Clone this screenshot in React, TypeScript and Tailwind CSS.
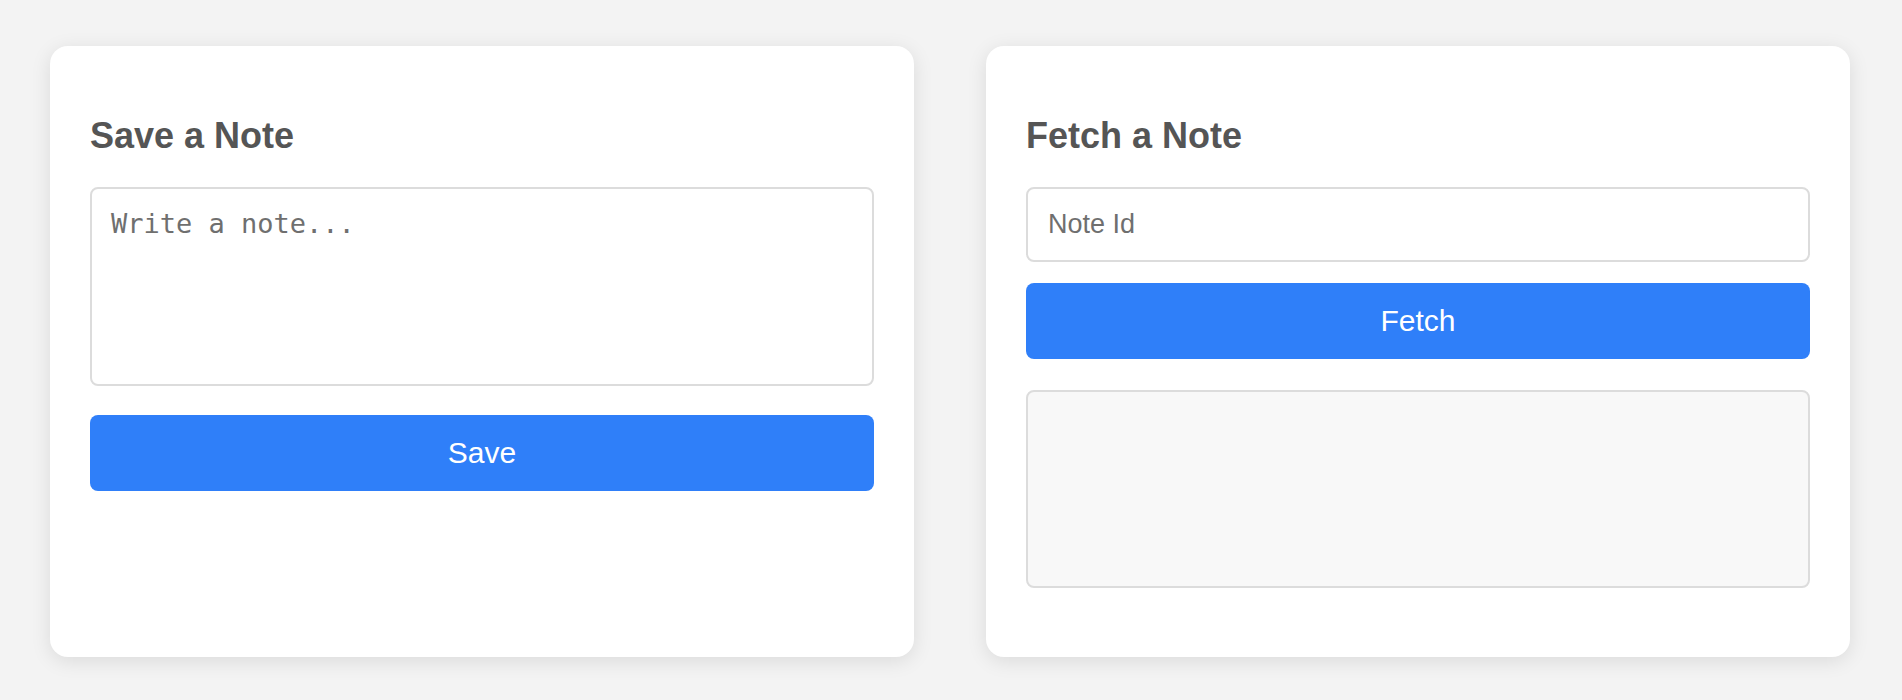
import { useState } from "react";

export default function App() {
  const [note, setNote] = useState("");
  const [noteId, setNoteId] = useState("");
  const [result, setResult] = useState("");

  const handleSave = () => {
    // nothing to save to in here, just clear the field
    setNote("");
  };

  const handleFetch = () => {
    setResult(noteId ? "" : "");
  };

  return (
    <div className="min-h-[700px] bg-[#f3f3f3] font-['Liberation_Sans',Arial,sans-serif]">
      <div className="flex gap-[72px] pl-[50px] pt-[46px]">
        <div className="w-[864px] rounded-[18px] bg-white px-[40px] pt-[40px] pb-[40px] shadow-[0_4px_20px_rgba(0,0,0,0.1)]">
          <h2 className="mt-[30px] mb-[31px] text-[36px] leading-[40px] font-bold text-[#555]">Save a Note</h2>
          <textarea
            placeholder="Write a note..."
            value={note}
            onChange={(e) => setNote(e.target.value)}
            className="block h-[199px] w-full resize-none rounded-[8px] border-2 border-[#dcdcdc] p-[19px] font-['DejaVu_Sans_Mono',monospace] text-[27px] leading-[32px] text-[#333] placeholder:text-[#6f6f6f] focus:outline-none"
          />
          <button
            type="button"
            onClick={handleSave}
            className="mt-[29px] block h-[76px] w-full rounded-[8px] border-0 bg-[#2f7ff9] text-[30px] leading-[74px] text-white"
          >
            Save
          </button>
        </div>

        <div className="w-[864px] rounded-[18px] bg-white px-[40px] pt-[40px] pb-[69px] shadow-[0_4px_20px_rgba(0,0,0,0.1)]">
          <h2 className="mt-[30px] mb-[31px] text-[36px] leading-[40px] font-bold text-[#555]">Fetch a Note</h2>
          <input
            type="text"
            placeholder="Note Id"
            value={noteId}
            onChange={(e) => setNoteId(e.target.value)}
            className="block h-[75px] w-full rounded-[8px] border-2 border-[#dcdcdc] px-[20px] text-[27px] text-[#333] placeholder:text-[#6f6f6f] focus:outline-none"
          />
          <button
            type="button"
            onClick={handleFetch}
            className="mt-[21px] block h-[76px] w-full rounded-[8px] border-0 bg-[#2f7ff9] text-[30px] leading-[74px] text-white"
          >
            Fetch
          </button>
          <div className="mt-[31px] h-[198px] w-full rounded-[8px] border-2 border-[#dcdcdc] bg-[#f8f8f8] p-[20px] text-[27px] text-[#333]">
            {result}
          </div>
        </div>
      </div>
    </div>
  );
}
